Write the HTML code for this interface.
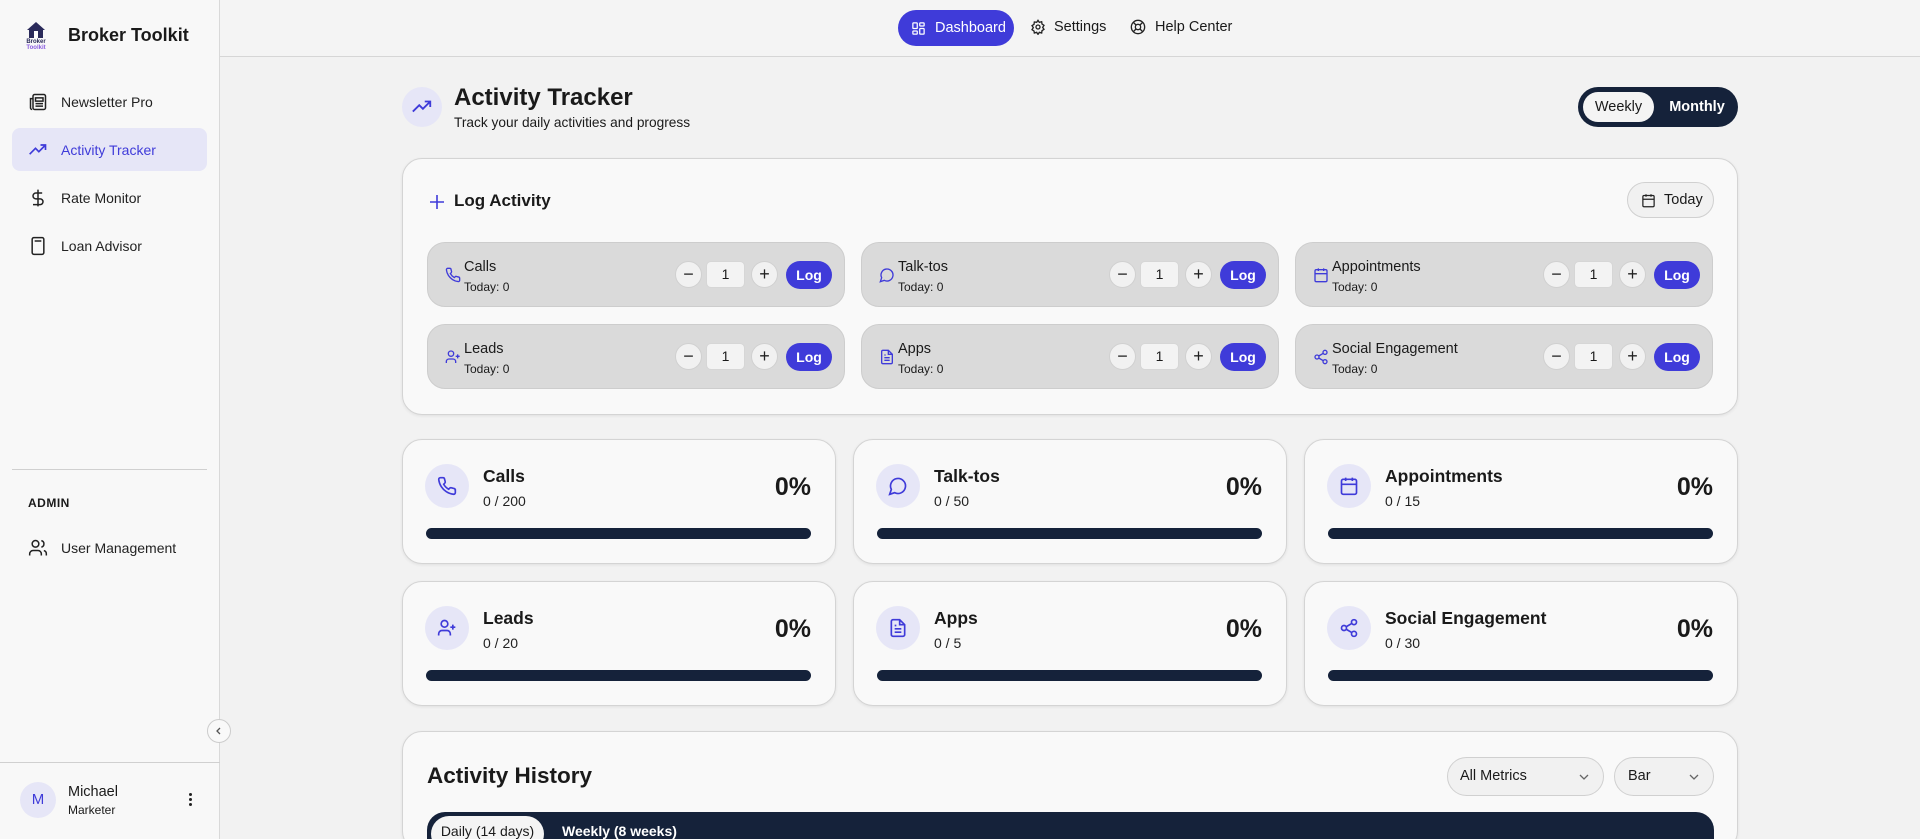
<!DOCTYPE html>
<html><head><meta charset="utf-8"><style>
*{box-sizing:border-box;margin:0;padding:0}
html,body{width:1920px;height:839px;overflow:hidden}
body{background:#f2f2f2;font-family:"Liberation Sans",sans-serif;color:#1a1a1a;position:relative}
.a{position:absolute}
svg{display:block}
.sb{left:0;top:0;width:220px;height:839px;background:#f8f8f8;border-right:1px solid #d9d9d9}
.nav{left:12px;width:195px;height:43px;border-radius:8px;display:flex;align-items:center;padding-left:16px;font-size:14px;color:#222}
.nav svg{margin-right:13px}
.top{left:220px;top:0;right:0;height:57px;border-bottom:1px solid #d6d6d6;background:#f4f4f4}
.card{background:#f9f9f9;border:1px solid #d4d4d4;border-radius:20px;box-shadow:0 1px 3px rgba(0,0,0,.08)}
.item{width:418px;height:65px;background:#dadada;border:1px solid #cdcdcd;border-radius:18px}
.item .ic{left:17px;top:24px}
.item .n{left:36px;top:16px;font-size:14.5px}
.item .t{left:36px;top:37px;font-size:12px}
.rb{width:27px;height:27px;border-radius:50%;background:#f1f1f1;border:1px solid #d0d0d0;top:18px;display:flex;align-items:center;justify-content:center;font-size:18px;color:#222}
.inp{left:278px;top:18px;width:39px;height:27px;background:#f3f3f3;border:1px solid #d6d6d6;border-radius:5px;text-align:center;line-height:25px;font-size:14px}
.log{left:358px;top:18px;width:46px;height:28px;background:#3f3bd9;color:#fff;border-radius:14px;text-align:center;line-height:28px;font-size:14px;font-weight:bold}
.st{width:434px;height:125px}
.st .c{left:22px;top:24px;width:44px;height:44px;border-radius:50%;background:#e6e6f7;display:flex;align-items:center;justify-content:center}
.st .n{left:80px;top:26px;font-size:17.5px;font-weight:bold}
.st .v{left:80px;top:53px;font-size:14px;color:#222}
.st .p{right:24px;top:33px;font-size:25px;font-weight:bold}
.st .bar{left:23px;right:24px;top:88px;height:11px;background:#15223a;border-radius:6px}
</style></head><body>
<div class="a sb">
 <div class="a" style="left:24px;top:21px;width:24px;height:28px">
  <svg width="24" height="18" viewBox="0 0 24 18"><path d="M12 1 L3 9 L5 9 L5 17 L19 17 L19 9 L21 9 Z" fill="#2a2a5a"/><rect x="10" y="10" width="4" height="7" fill="#fff"/></svg>
  <div style="font-size:6px;font-weight:bold;line-height:6px;color:#2a2a5a;text-align:center">Broker</div>
  <div style="font-size:6px;font-weight:bold;line-height:6px;color:#8a5ce0;text-align:center">Toolkit</div>
 </div>
 <div class="a" style="left:68px;top:25px;font-size:18px;font-weight:bold">Broker Toolkit</div>
 <div class="a nav" style="top:80px"><svg width="20" height="20" viewBox="0 0 24 24" fill="none" stroke="#222" stroke-width="1.8"><rect x="6" y="3" width="15" height="18" rx="2"/><path d="M6 8H3v11a2 2 0 002 2M9 7h9v4H9zM9 14h9M9 17h9"/></svg>Newsletter Pro</div>
 <div class="a nav" style="top:128px;background:#e6e6f7;color:#3f3bd9"><svg width="20" height="20" viewBox="0 0 24 24" fill="none" stroke="#3f3bd9" stroke-width="2"><path d="M2 17l7-7 4 4 8-8M15 6h6v6"/></svg>Activity Tracker</div>
 <div class="a nav" style="top:176px"><svg width="20" height="20" viewBox="0 0 24 24" fill="none" stroke="#222" stroke-width="1.8"><path d="M12 2v20M17 6H9.5a3.5 3.5 0 000 7h5a3.5 3.5 0 010 7H6"/></svg>Rate Monitor</div>
 <div class="a nav" style="top:224px"><svg width="20" height="20" viewBox="0 0 24 24" fill="none" stroke="#222" stroke-width="1.8"><rect x="5" y="2" width="14" height="20" rx="2"/><path d="M8 6h8M8 11h.01M12 11h.01M16 11h.01M8 15h.01M12 15h.01M16 15h.01M8 18h.01M12 18h.01M16 18h.01"/></svg>Loan Advisor</div>
 <div class="a" style="left:12px;top:469px;width:195px;border-top:1px solid #d0d0d0"></div>
 <div class="a" style="left:28px;top:496px;font-size:12px;font-weight:bold;letter-spacing:.5px">ADMIN</div>
 <div class="a nav" style="top:526px"><svg width="20" height="20" viewBox="0 0 24 24" fill="none" stroke="#222" stroke-width="1.8"><circle cx="9" cy="7" r="4"/><path d="M2 21v-2a4 4 0 014-4h6a4 4 0 014 4v2M16 3.1a4 4 0 010 7.8M22 21v-2a4 4 0 00-3-3.9"/></svg>User Management</div>
 <div class="a" style="left:0;top:762px;width:220px;border-top:1px solid #d0d0d0"></div>
 <div class="a" style="left:20px;top:782px;width:36px;height:36px;border-radius:50%;background:#e6e6f7;color:#3f3bd9;text-align:center;line-height:36px;font-size:15px">M</div>
 <div class="a" style="left:68px;top:784px;font-size:14.5px">Michael</div>
 <div class="a" style="left:68px;top:803px;font-size:12px">Marketer</div>
 <div class="a" style="left:189px;top:793px;width:4px"><div style="width:3px;height:3px;background:#222;border-radius:50%;margin-bottom:2px"></div><div style="width:3px;height:3px;background:#222;border-radius:50%;margin-bottom:2px"></div><div style="width:3px;height:3px;background:#222;border-radius:50%"></div></div>
</div>
<div class="a" style="left:207px;top:719px;width:24px;height:24px;border-radius:50%;background:#f9f9f9;border:1px solid #ccc;display:flex;align-items:center;justify-content:center"><svg width="10" height="10" viewBox="0 0 10 10" fill="none" stroke="#555" stroke-width="1.3"><path d="M6 2L3 5l3 3"/></svg></div>
<div class="a top"></div>
<div class="a" style="left:898px;top:10px;width:116px;height:36px;border-radius:18px;background:#3f3bd9;color:#fff;font-size:14.5px;display:flex;align-items:center;padding-left:13px"><svg width="15" height="15" viewBox="0 0 24 24" fill="none" stroke="#fff" stroke-width="2" style="margin-right:9px"><rect x="3" y="3" width="7" height="9" rx="1"/><rect x="14" y="3" width="7" height="5" rx="1"/><rect x="14" y="12" width="7" height="9" rx="1"/><rect x="3" y="16" width="7" height="5" rx="1"/></svg>Dashboard</div>
<div class="a" style="left:1030px;top:19px;font-size:14.5px;display:flex;align-items:center"><svg width="16" height="16" viewBox="0 0 24 24" fill="none" stroke="#222" stroke-width="2" style="margin-right:8px"><circle cx="12" cy="12" r="3"/><path d="M12 2l2 3 3.5-1 .5 3.5 3 2-2 3 2 3-3 2-.5 3.5-3.5-1-2 3-2-3-3.5 1L6 18l-3-2 2-3-2-3 3-2 .5-3.5L10 5z"/></svg>Settings</div>
<div class="a" style="left:1130px;top:19px;font-size:14.5px;display:flex;align-items:center"><svg width="16" height="16" viewBox="0 0 24 24" fill="none" stroke="#222" stroke-width="2" style="margin-right:9px"><circle cx="12" cy="12" r="10"/><circle cx="12" cy="12" r="4"/><path d="M4.9 4.9l4.3 4.3M14.8 14.8l4.3 4.3M14.8 9.2l4.3-4.3M4.9 19.1l4.3-4.3"/></svg>Help Center</div>

<div class="a" style="left:402px;top:87px;width:40px;height:40px;border-radius:50%;background:#e6e6f7;display:flex;align-items:center;justify-content:center"><svg width="22" height="22" viewBox="0 0 24 24" fill="none" stroke="#3f3bd9" stroke-width="2"><path d="M2 17l7-7 4 4 8-8M15 6h6v6"/></svg></div>
<div class="a" style="left:454px;top:84px;font-size:24px;font-weight:bold">Activity Tracker</div>
<div class="a" style="left:454px;top:115px;font-size:13.7px">Track your daily activities and progress</div>
<div class="a" style="left:1578px;top:87px;width:160px;height:40px;border-radius:20px;background:#15223a"></div>
<div class="a" style="left:1583px;top:92px;width:71px;height:30px;border-radius:15px;background:#f4f4f4;text-align:center;line-height:30px;font-size:14.5px">Weekly</div>
<div class="a" style="left:1664px;top:92px;width:66px;height:30px;text-align:center;line-height:30px;font-size:14.5px;color:#fff;font-weight:bold">Monthly</div>

<div class="a card" style="left:402px;top:158px;width:1336px;height:257px">
 <svg class="a" style="left:25px;top:34px" width="18" height="18" viewBox="0 0 18 18" stroke="#3f3bd9" stroke-width="1.6"><path d="M9 2v14M2 9h14"/></svg>
 <div class="a" style="left:51px;top:32px;font-size:17px;font-weight:bold">Log Activity</div>
 <div class="a" style="left:1224px;top:23px;width:87px;height:36px;border-radius:18px;border:1px solid #d0d0d0;background:#f1f1f1;display:flex;align-items:center;padding-left:13px;font-size:14.5px"><svg width="15" height="15" viewBox="0 0 24 24" fill="none" stroke="#222" stroke-width="2" style="margin-right:8px"><rect x="3" y="4" width="18" height="18" rx="2"/><path d="M16 2v4M8 2v4M3 10h18"/></svg>Today</div>
</div>
<!-- items -->
<div class="a item" style="left:427px;top:242px"><svg class="a ic" width="16" height="16" viewBox="0 0 24 24" fill="none" stroke="#3f3bd9" stroke-width="2"><path d="M22 16.9v3a2 2 0 01-2.2 2 19.8 19.8 0 01-8.6-3.1 19.5 19.5 0 01-6-6A19.8 19.8 0 012.1 4.2 2 2 0 014.1 2h3a2 2 0 012 1.7c.1 1 .4 1.9.7 2.8a2 2 0 01-.5 2.1L8 9.9a16 16 0 006 6l1.3-1.3a2 2 0 012.1-.4c.9.3 1.8.6 2.8.7a2 2 0 011.7 2z"/></svg><div class="a n">Calls</div><div class="a t">Today: 0</div><div class="a rb" style="left:247px">−</div><div class="a inp">1</div><div class="a rb" style="left:323px">+</div><div class="a log">Log</div></div>
<div class="a item" style="left:861px;top:242px"><svg class="a ic" width="16" height="16" viewBox="0 0 24 24" fill="none" stroke="#3f3bd9" stroke-width="2"><path d="M7.9 20A9 9 0 104 16.1L2 22z"/></svg><div class="a n">Talk-tos</div><div class="a t">Today: 0</div><div class="a rb" style="left:247px">−</div><div class="a inp">1</div><div class="a rb" style="left:323px">+</div><div class="a log">Log</div></div>
<div class="a item" style="left:1295px;top:242px"><svg class="a ic" width="16" height="16" viewBox="0 0 24 24" fill="none" stroke="#3f3bd9" stroke-width="2"><rect x="3" y="4" width="18" height="18" rx="2"/><path d="M16 2v4M8 2v4M3 10h18"/></svg><div class="a n">Appointments</div><div class="a t">Today: 0</div><div class="a rb" style="left:247px">−</div><div class="a inp">1</div><div class="a rb" style="left:323px">+</div><div class="a log">Log</div></div>
<div class="a item" style="left:427px;top:324px"><svg class="a ic" width="16" height="16" viewBox="0 0 24 24" fill="none" stroke="#3f3bd9" stroke-width="2"><circle cx="9" cy="7" r="4"/><path d="M2 21v-2a4 4 0 014-4h6a4 4 0 014 4v2M19 8v6M22 11h-6"/></svg><div class="a n">Leads</div><div class="a t">Today: 0</div><div class="a rb" style="left:247px">−</div><div class="a inp">1</div><div class="a rb" style="left:323px">+</div><div class="a log">Log</div></div>
<div class="a item" style="left:861px;top:324px"><svg class="a ic" width="16" height="16" viewBox="0 0 24 24" fill="none" stroke="#3f3bd9" stroke-width="2"><path d="M14 2H6a2 2 0 00-2 2v16a2 2 0 002 2h12a2 2 0 002-2V8z"/><path d="M14 2v6h6M16 13H8M16 17H8M10 9H8"/></svg><div class="a n">Apps</div><div class="a t">Today: 0</div><div class="a rb" style="left:247px">−</div><div class="a inp">1</div><div class="a rb" style="left:323px">+</div><div class="a log">Log</div></div>
<div class="a item" style="left:1295px;top:324px"><svg class="a ic" width="16" height="16" viewBox="0 0 24 24" fill="none" stroke="#3f3bd9" stroke-width="2"><circle cx="18" cy="5" r="3"/><circle cx="6" cy="12" r="3"/><circle cx="18" cy="19" r="3"/><path d="M8.6 13.5l6.8 4M15.4 6.5l-6.8 4"/></svg><div class="a n">Social Engagement</div><div class="a t">Today: 0</div><div class="a rb" style="left:247px">−</div><div class="a inp">1</div><div class="a rb" style="left:323px">+</div><div class="a log">Log</div></div>

<!-- stats -->
<div class="a card st" style="left:402px;top:439px"><div class="a c"><svg width="20" height="20" viewBox="0 0 24 24" fill="none" stroke="#3f3bd9" stroke-width="2"><path d="M22 16.9v3a2 2 0 01-2.2 2 19.8 19.8 0 01-8.6-3.1 19.5 19.5 0 01-6-6A19.8 19.8 0 012.1 4.2 2 2 0 014.1 2h3a2 2 0 012 1.7c.1 1 .4 1.9.7 2.8a2 2 0 01-.5 2.1L8 9.9a16 16 0 006 6l1.3-1.3a2 2 0 012.1-.4c.9.3 1.8.6 2.8.7a2 2 0 011.7 2z"/></svg></div><div class="a n">Calls</div><div class="a v">0 / 200</div><div class="a p">0%</div><div class="a bar"></div></div>
<div class="a card st" style="left:853px;top:439px"><div class="a c"><svg width="20" height="20" viewBox="0 0 24 24" fill="none" stroke="#3f3bd9" stroke-width="2"><path d="M7.9 20A9 9 0 104 16.1L2 22z"/></svg></div><div class="a n">Talk-tos</div><div class="a v">0 / 50</div><div class="a p">0%</div><div class="a bar"></div></div>
<div class="a card st" style="left:1304px;top:439px"><div class="a c"><svg width="20" height="20" viewBox="0 0 24 24" fill="none" stroke="#3f3bd9" stroke-width="2"><rect x="3" y="4" width="18" height="18" rx="2"/><path d="M16 2v4M8 2v4M3 10h18"/></svg></div><div class="a n">Appointments</div><div class="a v">0 / 15</div><div class="a p">0%</div><div class="a bar"></div></div>
<div class="a card st" style="left:402px;top:581px"><div class="a c"><svg width="20" height="20" viewBox="0 0 24 24" fill="none" stroke="#3f3bd9" stroke-width="2"><circle cx="9" cy="7" r="4"/><path d="M2 21v-2a4 4 0 014-4h6a4 4 0 014 4v2M19 8v6M22 11h-6"/></svg></div><div class="a n">Leads</div><div class="a v">0 / 20</div><div class="a p">0%</div><div class="a bar"></div></div>
<div class="a card st" style="left:853px;top:581px"><div class="a c"><svg width="20" height="20" viewBox="0 0 24 24" fill="none" stroke="#3f3bd9" stroke-width="2"><path d="M14 2H6a2 2 0 00-2 2v16a2 2 0 002 2h12a2 2 0 002-2V8z"/><path d="M14 2v6h6M16 13H8M16 17H8M10 9H8"/></svg></div><div class="a n">Apps</div><div class="a v">0 / 5</div><div class="a p">0%</div><div class="a bar"></div></div>
<div class="a card st" style="left:1304px;top:581px"><div class="a c"><svg width="20" height="20" viewBox="0 0 24 24" fill="none" stroke="#3f3bd9" stroke-width="2"><circle cx="18" cy="5" r="3"/><circle cx="6" cy="12" r="3"/><circle cx="18" cy="19" r="3"/><path d="M8.6 13.5l6.8 4M15.4 6.5l-6.8 4"/></svg></div><div class="a n">Social Engagement</div><div class="a v">0 / 30</div><div class="a p">0%</div><div class="a bar"></div></div>

<div class="a card" style="left:402px;top:731px;width:1336px;height:120px">
 <div class="a" style="left:24px;top:31px;font-size:22.5px;font-weight:bold">Activity History</div>
 <div class="a" style="left:1044px;top:25px;width:157px;height:39px;border-radius:20px;border:1px solid #d0d0d0;background:#f1f1f1;font-size:14.5px;line-height:37px;padding-left:12px">All Metrics<svg class="a" style="right:14px;top:15px" width="10" height="8" viewBox="0 0 10 8" fill="none" stroke="#666" stroke-width="1.3"><path d="M1 2l4 4 4-4"/></svg></div>
 <div class="a" style="left:1211px;top:25px;width:100px;height:39px;border-radius:20px;border:1px solid #d0d0d0;background:#f1f1f1;font-size:14.5px;line-height:37px;padding-left:13px">Bar<svg class="a" style="right:14px;top:15px" width="10" height="8" viewBox="0 0 10 8" fill="none" stroke="#666" stroke-width="1.3"><path d="M1 2l4 4 4-4"/></svg></div>
 <div class="a" style="left:24px;top:80px;width:1287px;height:40px;border-radius:18px 18px 0 0;background:#15223a">
  <div class="a" style="left:4px;top:4px;width:113px;height:36px;border-radius:18px;background:#f4f4f4;font-size:14px;text-align:center;line-height:30px">Daily (14 days)</div>
  <div class="a" style="left:135px;top:4px;font-size:14px;color:#fff;font-weight:bold;line-height:30px">Weekly (8 weeks)</div>
 </div>
</div>
</body></html>
